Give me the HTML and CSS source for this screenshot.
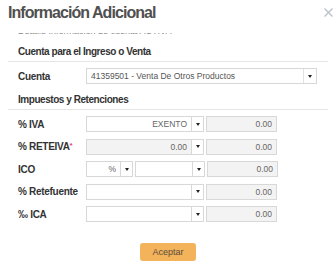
FILE: index.html
```html
<!DOCTYPE html>
<html lang="es">
<head>
  <meta charset="UTF-8" />
  <title>Información Adicional</title>
  <link rel="stylesheet" href="styles.css">
</head>
<body>
  <div class="modal">
    <div class="modal-header">
      <h1>Información Adicional</h1>
      <svg class="close" width="9" height="9" viewBox="0 0 9 9">
        <path d="M0.5 0.5 L8.5 8.5 M8.5 0.5 L0.5 8.5" stroke="#b9bdc9" stroke-width="1.2" fill="none"/>
      </svg>
    </div>

    <div class="modal-body">
      <div class="cut">
        <div class="cut-inner">Detalle Información de cuenta ACTIVA</div>
      </div>

      <div class="section-title">Cuenta para el Ingreso o Venta</div>
      <div class="row">
        <label class="label">Cuenta</label>
        <div class="select select-wide">
          <span class="select-text">41359501 - Venta De Otros Productos</span>
          <span class="arrow-btn"><span class="arrow"></span></span>
        </div>
      </div>

      <div class="section-title">Impuestos y Retenciones</div>

      <div class="row">
        <label class="label">% IVA</label>
        <div class="field field-main">EXENTO</div>
        <span class="arrow-btn"><span class="arrow"></span></span>
        <div class="field field-ro">0.00</div>
      </div>

      <div class="row">
        <label class="label">% RETEIVA<span class="req">*</span></label>
        <div class="field field-main disabled">0.00</div>
        <span class="arrow-btn"><span class="arrow"></span></span>
        <div class="field field-ro">0.00</div>
      </div>

      <div class="row">
        <label class="label">ICO</label>
        <div class="field field-small">%</div>
        <span class="arrow-btn"><span class="arrow"></span></span>
        <div class="field field-mid"></div>
        <span class="arrow-btn"><span class="arrow"></span></span>
        <div class="field field-ro">0.00</div>
      </div>

      <div class="row">
        <label class="label">% Retefuente</label>
        <div class="field field-main"></div>
        <span class="arrow-btn"><span class="arrow"></span></span>
        <div class="field field-ro">0.00</div>
      </div>

      <div class="row">
        <label class="label">‰ ICA</label>
        <div class="field field-main"></div>
        <span class="arrow-btn"><span class="arrow"></span></span>
        <div class="field field-ro">0.00</div>
      </div>

      <div class="actions">
        <button class="btn btn-accept">Aceptar</button>
      </div>
    </div>
  </div>
</body>
</html>
```
FILE: styles.css
```css
body {
  margin: 0;
  background: #fff;
  font-family: "Liberation Sans", Arial, sans-serif;
  color: #333;
}
.modal {
  width: 336px;
  height: 270px;
  background: #fff;
  overflow: hidden;
}
.modal-header {
  display: flex;
  justify-content: space-between;
  align-items: center;
  height: 25px;
  padding: 0 3px 0 8px;
}
h1 {
  margin: 0;
  font-size: 16px;
  letter-spacing: -0.95px;
  font-weight: bold;
  color: #505050;
}
.close {
  display: block;
}
.modal-body {
  padding: 0 8px;
}
/* list above is scrolled, only the bottom of its last line shows */
.cut {
  height: 3px;
  margin-top: 8px;
  overflow: hidden;
}
.cut-inner {
  margin-top: -7px;
  padding-left: 10px;
  font-size: 9px;
  line-height: 10px;
  color: #888;
}
.section-title {
  margin-top: 10px;
  padding: 0 0 3px 10px;
  line-height: 12px;
  border-bottom: 1px solid #e6e6e6;
  font-size: 10px;
  letter-spacing: -0.45px;
  font-weight: bold;
}
.row {
  display: flex;
  align-items: center;
  height: 16px;
  margin-top: 6.5px;
}
.section-title + .row {
  margin-top: 6px;
}
.label {
  width: 78px;
  padding-left: 10px;
  font-size: 10px;
  letter-spacing: -0.3px;
  font-weight: bold;
  box-sizing: border-box;
  white-space: nowrap;
}
.req {
  color: #e0457b;
  font-size: 8px;
  vertical-align: top;
}
.select {
  display: flex;
  align-items: center;
  justify-content: space-between;
  height: 16px;
  border: 1px solid #d8d8d8;
  box-sizing: border-box;
  padding-left: 4px;
  font-size: 8.5px;
  color: #555;
}
.select-wide {
  width: 231px;
}
.select .arrow-btn {
  height: 14px;
  border-top: none;
  border-bottom: none;
  border-right: none;
  border-left: 1px solid #e2e2e2;
  width: 13px;
}
.field {
  height: 16px;
  line-height: 14px;
  border: 1px solid #d8d8d8;
  box-sizing: border-box;
  padding: 0 4px;
  text-align: right;
  font-size: 8.5px;
  color: #666;
}
.field-main {
  width: 106px;
}
.field-small {
  width: 35px;
}
.field-mid {
  width: 58px;
  margin-left: 2px;
}
.field-ro {
  width: 71px;
  margin-left: 2px;
  background: #f3f3f3;
}
.disabled {
  background: #f3f3f3;
}
.arrow-btn {
  display: flex;
  align-items: center;
  justify-content: center;
  width: 12px;
  height: 16px;
  border: 1px solid #d8d8d8;
  border-left: none;
  box-sizing: border-box;
}
.arrow {
  width: 0;
  height: 0;
  border-left: 2.5px solid transparent;
  border-right: 2.5px solid transparent;
  border-top: 3px solid #222;
}
.actions {
  display: flex;
  justify-content: center;
  margin-top: 21px;
}
.btn {
  width: 56px;
  height: 18px;
  border: none;
  border-radius: 3px;
  font-family: inherit;
  font-size: 9px;
  cursor: pointer;
}
.btn-accept {
  background: #f2b35b;
  color: #5d4c3a;
}
```
